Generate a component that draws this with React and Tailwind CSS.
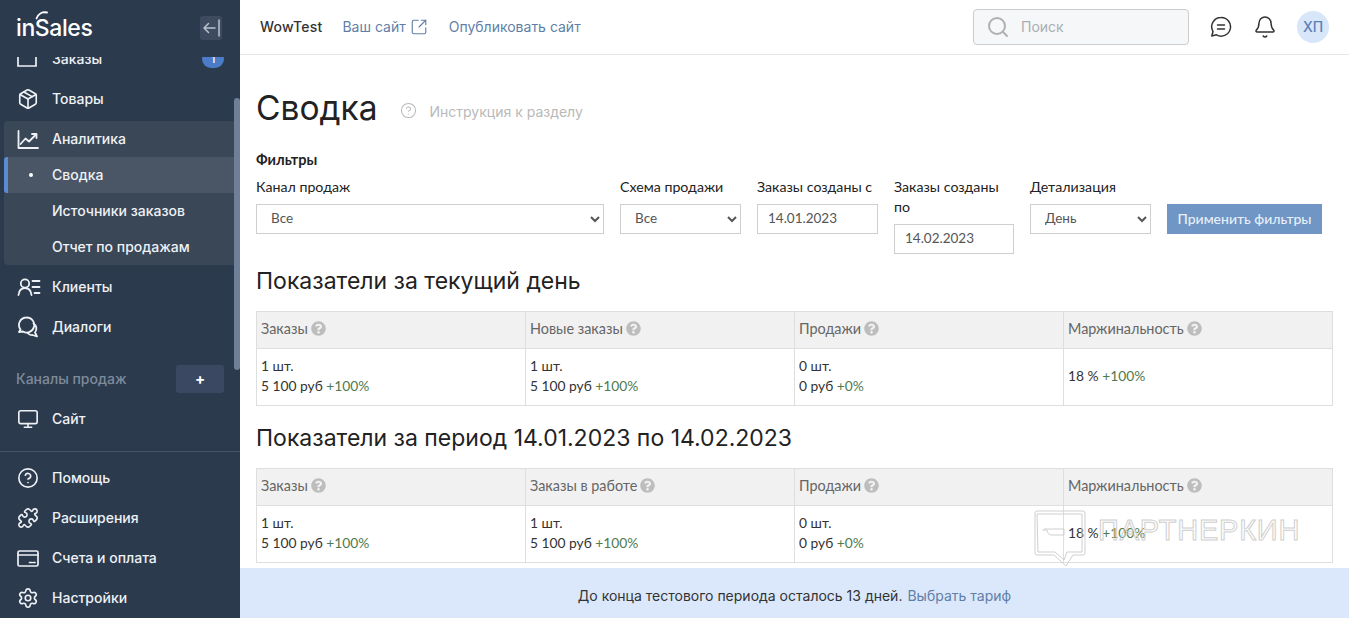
import { Package, Monitor, CircleHelp, Puzzle, Settings, Bell, Search, SquareArrowOutUpRight } from 'lucide-react'
import { FaQuestionCircle } from 'react-icons/fa'

const ui = "font-['Inter','Noto_Sans',sans-serif]"

function NavRow({ icon, label, badge }) {
  return (
    <div className="flex h-10 items-center pl-[17px] pr-4 text-[14px] font-medium text-[#eef1f5]">
      <span className="flex w-[35px] shrink-0 items-center">{icon}</span>
      <span className="mb-[2px]">{label}</span>
      {badge && (
        <span className="ml-auto flex h-[18px] w-[22px] items-center justify-center rounded-full bg-[#4a7cc7] text-[11px] text-white">
          {badge}
        </span>
      )}
    </div>
  )
}

function SubRow({ label }) {
  return (
    <div className="flex h-9 items-center pl-[48px] text-[14px] font-medium text-[#eef1f5]">
      <span className="mb-[2px]">{label}</span>
    </div>
  )
}

function ClientsIcon() {
  return (
    <svg width="24" height="20" viewBox="0 0 24 20" fill="none" stroke="#eef1f5" strokeWidth="1.800" strokeLinecap="round">
      <circle cx="8" cy="6.500" r="4.200" />
      <path d="M1.500 18c.5-4.200 3-7 6.500-7s6 2.800 6.500 7" />
      <path d="M15.500 4h7M15.500 10h7M17.500 16h5" />
    </svg>
  )
}

function DialogsIcon() {
  return (
    <svg width="22" height="22" viewBox="0 0 22 22" fill="none" stroke="#eef1f5" strokeWidth="1.800" strokeLinecap="round" strokeLinejoin="round">
      <path d="M9.500 1.500a7.500 7.500 0 0 0-6 12l-1.500 2.500 4-.5a7.500 7.500 0 1 0 3.500-14z" />
      <path d="M16.500 7.500a6 6 0 0 1 1.500 9l2 4-4.500-1.500a6 6 0 0 1-5-2" />
    </svg>
  )
}

function AnalyticsIcon() {
  return (
    <svg width="22" height="22" viewBox="0 0 22 22" fill="none" stroke="#eef1f5" strokeWidth="1.800" strokeLinecap="round" strokeLinejoin="round">
      <path d="M1.500 3v17h19.500" />
      <path d="M3.500 16l5-5.500 3.500 3 7-7" />
      <path d="M15 6h4.500v4" />
    </svg>
  )
}

function BillingIcon() {
  return (
    <svg width="22" height="22" viewBox="0 0 22 22" fill="none" stroke="#eef1f5" strokeWidth="1.700" strokeLinecap="round">
      <rect x="1" y="4" width="20" height="15" rx="1.500" />
      <path d="M1 8h20M12.500 15.500h2M16 15.500h2" />
    </svg>
  )
}

function Logo() {
  return (
    <div className="relative text-[23px] font-medium leading-none tracking-[-0.4px] text-white">
      <svg className="absolute left-[19px] top-[-7px]" width="14" height="10" viewBox="0 0 14 10" fill="none" stroke="#fff" strokeWidth="1.800" strokeLinecap="round">
        <path d="M1.500 8.500C3 4 7 1.500 12 2.500" />
      </svg>
      inSales
    </div>
  )
}

function Hint() {
  return <FaQuestionCircle className="ml-[3px] inline-block align-[-2px] text-[#bdbdbd]" size={15} />
}

function Sidebar() {
  return (
    <aside className={`flex h-full w-[240px] shrink-0 flex-col bg-[#2c3a4d] ${ui}`}>
      <div className="relative z-10 flex h-[57px] shrink-0 items-center justify-between bg-[#2c3a4d] pb-[1px] pl-4 pr-[18px]">
        <Logo />
        <div className="flex h-6 w-[22px] items-center justify-center rounded-[3px] bg-[#3d4a60]">
          <svg width="20" height="20" viewBox="0 0 20 20" fill="none" stroke="#b9c2cf" strokeWidth="1.500" strokeLinecap="round" strokeLinejoin="round">
            <path d="M14 10H3M7.500 5.500 3 10l4.500 4.500M18 2v16" />
          </svg>
        </div>
      </div>

      <div className="relative h-[394px] shrink-0 overflow-hidden">
        <div className="-mt-[18px]">
          <NavRow
            label="Заказы"
            badge="1"
            icon={
              <svg width="20" height="20" viewBox="0 0 20 20" fill="none" stroke="#eef1f5" strokeWidth="1.700">
                <path d="M1 0h18v17H1z" />
              </svg>
            }
          />
          <NavRow label="Товары" icon={<Package size={22} strokeWidth={1.8} />} />

          <div className="mb-[2px] ml-1 mr-[6px] mt-[2px] rounded-l-[4px] bg-[#3a4757]">
            <div className="-ml-1 flex h-9 items-center pl-[17px] text-[14px] font-medium text-[#eef1f5]">
              <span className="flex w-[35px] items-center"><AnalyticsIcon /></span>
              <span className="mb-[2px]">Аналитика</span>
            </div>
            <div className="flex h-9 items-center rounded-l-[3px] border-l-4 border-[#5b8bd0] bg-[#4a5666] text-[14px] font-medium text-[#eef1f5]">
              <span className="flex w-[44px] justify-center pl-[1px]"><span className="h-1 w-1 rounded-full bg-white" /></span>
              <span className="mb-[2px]">Сводка</span>
            </div>
            <SubRow label="Источники заказов" />
            <SubRow label="Отчет по продажам" />
          </div>

          <NavRow label="Клиенты" icon={<ClientsIcon />} />
          <NavRow label="Диалоги" icon={<DialogsIcon />} />

          <div className="mb-[6px] mt-[18px] flex h-7 items-center justify-between pl-4 pr-4 text-[14px] font-medium text-[#7f8b9b]">
            <span className="mb-[2px]">Каналы продаж</span>
            <div className="flex h-7 w-12 items-center justify-center rounded-[3px] bg-[#3a4961] pb-[2px] text-[15px] font-bold leading-none text-white">+</div>
          </div>
          <NavRow label="Сайт" icon={<Monitor size={22} strokeWidth={1.8} />} />
        </div>
        <div className="absolute right-0 top-[41px] h-[272px] w-[6px] rounded-[3px] bg-[#6f7f98]" />
      </div>

      <div className="flex-1 overflow-hidden border-t border-[#465468] pt-[6px]">
        <NavRow label="Помощь" icon={<CircleHelp size={22} strokeWidth={1.8} />} />
        <NavRow label="Расширения" icon={<Puzzle size={22} strokeWidth={1.8} />} />
        <NavRow label="Счета и оплата" icon={<BillingIcon />} />
        <NavRow label="Настройки" icon={<Settings size={22} strokeWidth={1.8} />} />
      </div>
    </aside>
  )
}

function Header() {
  return (
    <header className={`flex h-[55px] shrink-0 items-center border-b border-[#e6e6e6] pl-5 text-[14px] ${ui}`}>
      <span className="mb-[2px] font-medium tracking-[0.2px] text-[#333]">WowTest</span>
      <span className="ml-5 flex items-center text-[#5f7fa8]">
        <span className="mb-[2px]">Ваш сайт</span>
        <SquareArrowOutUpRight className="ml-[4px]" size={18} strokeWidth={1.5} />
      </span>
      <span className="mb-[2px] ml-[21px] text-[#5f7fa8]">Опубликовать сайт</span>

      <div className="ml-auto flex h-9 w-[216px] items-center rounded-[4px] border border-[#cccccc] bg-[#f6f7f9] pl-3 text-[#a9adb3]">
        <Search size={24} strokeWidth={2} className="text-[#b0b0b0]" />
        <span className="mb-[2px] ml-[11px]">Поиск</span>
      </div>
      <svg className="ml-[21px]" width="22" height="22" viewBox="0 0 22 22" fill="none" stroke="#333" strokeWidth="1.500" strokeLinecap="round" strokeLinejoin="round">
        <path d="M11 1.500a9.300 9.300 0 0 0-8 14L1.800 20l4.700-1.200A9.300 9.300 0 1 0 11 1.500z" />
        <path d="M7.500 9h7M7.500 13h7" />
      </svg>
      <Bell className="ml-[21px] text-[#333]" size={24} strokeWidth={1.5} />
      <div className="ml-5 mr-[20px] flex h-8 w-8 items-center justify-center rounded-full bg-[#d8e6fa] pb-[1px] text-[14px] font-medium text-[#5b80b8]">ХП</div>
    </header>
  )
}

function Field({ label, width, children }) {
  return (
    <div className={`shrink-0 ${width}`}>
      <label className="mb-[7px] block text-[14.2px] leading-[20px] text-[#222]">{label}</label>
      {children}
    </div>
  )
}

const control = 'h-[30px] w-full border border-[#cfcfcf] bg-white px-[10px] pb-[3px] text-[13.5px] text-[#555]'

function Filters() {
  return (
    <div className="mt-[7px] flex gap-4">
      <Field label="Канал продаж" width="w-[348px]">
        <select className={control}><option>Все</option></select>
      </Field>
      <Field label="Схема продажи" width="w-[121px]">
        <select className={control}><option>Все</option></select>
      </Field>
      <Field label="Заказы созданы с" width="w-[121px]">
        <input className={control} defaultValue="14.01.2023" />
      </Field>
      <Field label="Заказы созданы по" width="w-[120px]">
        <input className={control} defaultValue="14.02.2023" />
      </Field>
      <Field label="Детализация" width="w-[121px]">
        <select className={control}><option>День</option></select>
      </Field>
      <button className="mt-[27px] h-[30px] w-[155px] shrink-0 bg-[#6f96c4] pb-[2px] text-[14px] font-medium text-[#e8eff8]">
        Применить фильтры
      </button>
    </div>
  )
}

function Stats({ columns }) {
  return (
    <table className="mt-[13px] w-[1077px] table-fixed border-collapse text-[13.8px] text-[#333]">
      <thead>
        <tr className="h-[37px] bg-[#f1f1f1]">
          {columns.map((c) => (
            <th key={c.title} className="border border-[#dedede] px-1 pb-[3px] text-left text-[14.4px] font-normal text-[#666]">
              {c.title}
              <Hint />
            </th>
          ))}
        </tr>
      </thead>
      <tbody>
        <tr className="h-[57px]">
          {columns.map((c) => (
            <td key={c.title} className="border border-[#dedede] px-1 pb-[2px] leading-[20px]">
              {c.lines.map((l) => (
                <div key={l[0]}>
                  {l[0]}
                  {l[1] && <span className="text-[#4f7a4f]"> {l[1]}</span>}
                </div>
              ))}
            </td>
          ))}
        </tr>
      </tbody>
    </table>
  )
}

const todayColumns = [
  { title: 'Заказы', lines: [['1 шт.'], ['5 100 руб', '+100%']] },
  { title: 'Новые заказы', lines: [['1 шт.'], ['5 100 руб', '+100%']] },
  { title: 'Продажи', lines: [['0 шт.'], ['0 руб', '+0%']] },
  { title: 'Маржинальность', lines: [['18 %', '+100%']] },
]

const periodColumns = [
  { title: 'Заказы', lines: [['1 шт.'], ['5 100 руб', '+100%']] },
  { title: 'Заказы в работе', lines: [['1 шт.'], ['5 100 руб', '+100%']] },
  { title: 'Продажи', lines: [['0 шт.'], ['0 руб', '+0%']] },
  { title: 'Маржинальность', lines: [['18 %', '+100%']] },
]

function Watermark() {
  return (
    <div className="pointer-events-none absolute left-[794px] top-[510px] flex items-start">
      <svg width="54" height="58" viewBox="0 0 54 58" fill="none" stroke="#cfcfcf" strokeWidth="1">
        <path d="M3 1h46a2 2 0 0 1 2 2v40a2 2 0 0 1-2 2h-10l-7 11-12-11H3a2 2 0 0 1-2-2V3a2 2 0 0 1 2-2z" />
        <path d="M3 4h45v38H33l-3 8-9-8H4z" />
        <path d="M8 20h5a5 5 0 0 0 5 5h12v-6H10" />
      </svg>
      <span className="ml-[10px] mt-[4px] font-['Liberation_Sans',sans-serif] text-[29px] leading-[32px] tracking-[0.8px] text-transparent [-webkit-text-stroke:1px_#cfcfcf]">
        ПАРТНЕРКИН
      </span>
    </div>
  )
}

export default function App() {
  return (
    <div className="flex h-screen w-full overflow-hidden bg-white">
      <Sidebar />
      <main className="relative mr-[2px] flex min-w-0 flex-1 flex-col">
        <Header />
        <div className="min-h-0 flex-1 overflow-hidden px-4 font-['Lato','Noto_Sans',sans-serif]">
          <div className={`mt-[32px] flex h-11 items-center ${ui}`}>
            <h1 className="mb-[2px] text-[33.500px] font-normal text-[#222]">Сводка</h1>
            <CircleHelp className="ml-[22px] mt-[3px] text-[#b9b9b9]" size={17} strokeWidth={1.5} />
            <span className="ml-[13px] mt-[4px] text-[14px] text-[#b9b9b9]">Инструкция к разделу</span>
          </div>
          <div className="mt-[19px] text-[14.500px] font-bold leading-[20px] text-[#222]">Фильтры</div>
          <Filters />
          <h2 className={`mt-[11px] pb-[1px] text-[23px] font-normal leading-[32px] text-[#222] ${ui}`}>Показатели за текущий день</h2>
          <Stats columns={todayColumns} />
          <h2 className={`mt-[16px] pb-[1px] text-[23px] font-normal leading-[32px] text-[#222] ${ui}`}>Показатели за период 14.01.2023 по 14.02.2023</h2>
          <Stats columns={periodColumns} />
        </div>
        <div className={`flex h-[50px] shrink-0 items-center justify-center bg-[#dbe8fb] pt-[4px] text-[14px] text-[#333] ${ui}`}>
          До конца тестового периода осталось 13 дней.
          <span className="ml-[5px] text-[#5f7fa8]">Выбрать тариф</span>
        </div>
        <Watermark />
      </main>
    </div>
  )
}
